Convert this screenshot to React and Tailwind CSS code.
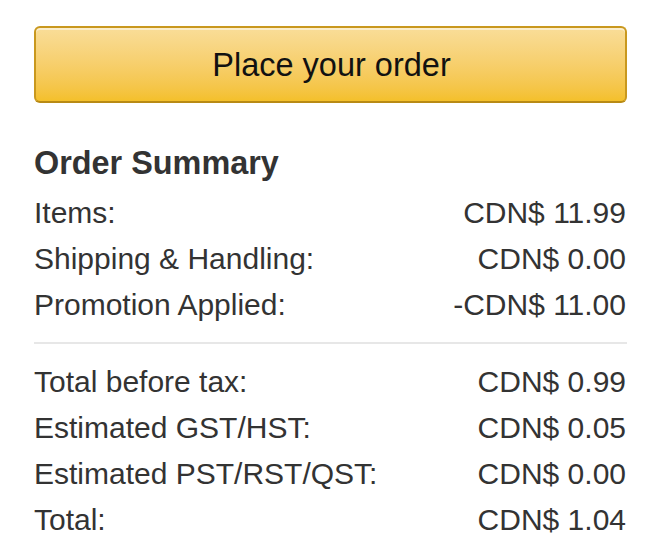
export default function App() {
  const rows1 = [
    ["Items:", "CDN$ 11.99"],
    ["Shipping & Handling:", "CDN$ 0.00"],
    ["Promotion Applied:", "-CDN$ 11.00"],
  ];
  const rows2 = [
    ["Total before tax:", "CDN$ 0.99"],
    ["Estimated GST/HST:", "CDN$ 0.05"],
    ["Estimated PST/RST/QST:", "CDN$ 0.00"],
    ["Total:", "CDN$ 1.04"],
  ];
  return (
    <div className="w-[656px] h-[548px] bg-white pl-[34px] pr-[29px] pt-[26px] text-[#333] font-['Liberation_Sans',Arial,sans-serif]">
      <button className="w-full h-[77px] rounded-[6px] border-2 border-[#c9981e] border-b-[#b88a14] bg-gradient-to-b from-[#f9dd98] to-[#f4c02a] text-[32.5px] text-[#111] shadow-[inset_0_2px_0_rgba(255,255,255,0.5)] pl-[2px] pt-[2px]">
        Place your order
      </button>
      <h2 className="mt-[40px] text-[32.4px] leading-[40px] font-bold">Order Summary</h2>
      <div className="mt-[7px] pr-[1px]">
        {rows1.map(([l, r]) => (
          <div key={l} className="flex justify-between text-[30px] leading-[46px]">
            <span>{l}</span>
            <span>{r}</span>
          </div>
        ))}
      </div>
      <div className="my-[14px] h-[2px] bg-[#e7e7e7]" />
      <div className="mt-[15px] pr-[1px]">
        {rows2.map(([l, r]) => (
          <div key={l} className="flex justify-between text-[30px] leading-[46px]">
            <span>{l}</span>
            <span>{r}</span>
          </div>
        ))}
      </div>
    </div>
  );
}
